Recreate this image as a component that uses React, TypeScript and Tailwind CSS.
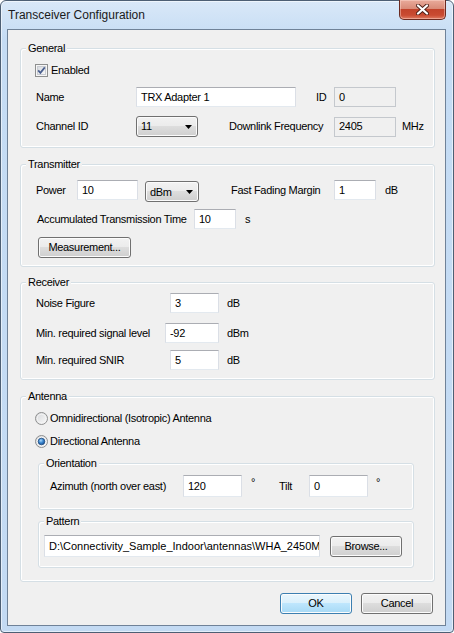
import React from 'react';

const btnBg =
  'bg-[linear-gradient(to_bottom,#f2f2f2_0%,#ebebeb_50%,#dddddd_50%,#cfcfcf_100%)]';

const TextBox = ({
  w,
  value,
  disabled,
  h = 'h-[20px]',
  extra = '',
}: {
  w: string;
  value: string;
  disabled?: boolean;
  h?: string;
  extra?: string;
}) => (
  <div
    className={`${w} ${h} ${extra} flex shrink-0 items-center overflow-hidden whitespace-nowrap border pl-[4px] ${
      disabled
        ? 'border-[#c4c8cd] bg-[#f0f0f0]'
        : 'border-[#dbdfe6] border-t-[#abadb3] border-b-[#e3e9ef] bg-white'
    }`}
  >
    {value}
  </div>
);

const Combo = ({ w, value }: { w: string; value: string }) => (
  <div
    className={`${w} flex h-[21px] shrink-0 items-center justify-between rounded-[3px] border border-[#707070] pl-[4px] pr-[5px] shadow-[inset_0_0_0_1px_#fbfbfb] ${btnBg}`}
  >
    <span>{value}</span>
    <svg width="7" height="4" viewBox="0 0 7 4">
      <path d="M0 0h7L3.5 4z" fill="#000" />
    </svg>
  </div>
);

const Button = ({
  w,
  label,
  primary,
}: {
  w: string;
  label: string;
  primary?: boolean;
}) => (
  <div
    className={`${w} flex h-[21px] shrink-0 items-center justify-center rounded-[3px] border shadow-[inset_0_0_0_1px_#fcfcfc] ${
      primary
        ? 'border-[#3c7fb1] bg-[linear-gradient(to_bottom,#eaf6fd_0%,#d9f0fc_50%,#bee6fd_50%,#a7d9f5_100%)]'
        : `border-[#707070] ${btnBg}`
    }`}
  >
    {label}
  </div>
);

const Group = ({
  title,
  className,
  children,
}: {
  title: string;
  className: string;
  children: React.ReactNode;
}) => (
  <div
    className={`flex shrink-0 flex-col rounded-[3px] border border-[#d5dfe5] shadow-[inset_1px_1px_0_#fff,inset_-1px_-1px_0_#fff] ${className}`}
  >
    <span className="-mt-[8px] ml-[5px] self-start bg-[#f0f0f0] px-[2px] leading-[14px]">
      {title}
    </span>
    {children}
  </div>
);

const CheckBox = () => (
  <svg width="13" height="13" viewBox="0 0 13 13">
    <defs>
      <linearGradient id="cbg" x1="0" y1="0" x2="1" y2="1">
        <stop offset="0" stopColor="#d6d9de" />
        <stop offset="1" stopColor="#fafafa" />
      </linearGradient>
    </defs>
    <rect x="0.5" y="0.5" width="12" height="12" fill="#f6f6f6" stroke="#8e8f8f" />
    <rect x="2.5" y="2.5" width="8" height="8" fill="url(#cbg)" stroke="#c9ccd2" />
    <path d="M3.2 6.4 5.4 8.9 9.8 3.4" fill="none" stroke="#4a5f8f" strokeWidth="1.7" />
  </svg>
);

const Radio = ({ checked }: { checked?: boolean }) => (
  <svg width="13" height="13" viewBox="0 0 13 13">
    <defs>
      <linearGradient id="rbg" x1="0" y1="0" x2="1" y2="1">
        <stop offset="0" stopColor="#d4d6d9" />
        <stop offset="1" stopColor="#fbfbfb" />
      </linearGradient>
      <radialGradient id="rdot" cx="0.4" cy="0.35" r="0.7">
        <stop offset="0" stopColor="#a9d8fb" />
        <stop offset="0.5" stopColor="#3a86cf" />
        <stop offset="1" stopColor="#1a4d8e" />
      </radialGradient>
    </defs>
    <circle cx="6.5" cy="6.5" r="6" fill="url(#rbg)" stroke="#8e8f8f" />
    <circle cx="6.5" cy="6.5" r="4.3" fill="none" stroke="#f4f4f4" />
    {checked && <circle cx="6.5" cy="6.5" r="3.3" fill="url(#rdot)" stroke="#1f4c80" strokeWidth="0.8" />}
  </svg>
);

export default function App() {
  return (
    <div className="h-[633px] w-[454px] bg-white font-['Liberation_Sans',Arial,sans-serif] text-[11px] tracking-[-0.3px] text-black">
      <div className="flex h-[633px] w-[454px] flex-col rounded-t-[6px] rounded-b-[4px] border border-[#4d5f74] bg-[linear-gradient(to_bottom,#d9e8f8_0%,#c5dcf4_6%,#c3daf3_100%)] pb-[6px] pl-[6px] pr-[7px] shadow-[inset_0_0_0_1px_rgba(255,255,255,0.55)]">
        <div className="flex h-[28px] shrink-0 items-start justify-between">
          <span className="ml-[1px] mt-[7px] text-[12px] leading-[14px] tracking-normal text-[#1a1a1a]">
            Transceiver Configuration
          </span>
          <div className="-mt-[1px] flex h-[20px] w-[47px] items-center justify-center rounded-b-[5px] border border-t-0 border-[#6b2a20] bg-[linear-gradient(to_bottom,#e9ab9b_0%,#d98b78_45%,#c2432b_50%,#c94b32_80%,#df7b62_100%)] shadow-[inset_0_0_0_1px_rgba(255,220,210,0.45)]">
            <svg width="13" height="11" viewBox="0 0 13 11">
              <path d="M2 1.5 11 9.5M11 1.5 2 9.5" stroke="#4a1c14" strokeWidth="4" strokeLinecap="round" />
              <path d="M2 1.5 11 9.5M11 1.5 2 9.5" stroke="#fff" strokeWidth="2.3" strokeLinecap="round" />
            </svg>
          </div>
        </div>

        <div className="flex h-[597px] shrink-0 flex-col border border-[#6f8298] bg-[#f0f0f0] pl-[12px] pr-[10px]">
          <Group title="General" className="mt-[18px] h-[100px]">
            <div className="mt-[9px] flex h-[13px] items-center pl-[14px]">
              <CheckBox />
              <span className="ml-[3px]">Enabled</span>
            </div>
            <div className="mt-[10px] flex h-[20px] items-center pl-[15px]">
              <span className="w-[100px] shrink-0">Name</span>
              <TextBox w="w-[160px]" value="TRX Adapter 1" />
              <span className="ml-[20px] w-[18px] shrink-0">ID</span>
              <TextBox w="w-[62px]" value="0" disabled />
            </div>
            <div className="mt-[9px] flex h-[21px] items-center pl-[15px]">
              <span className="w-[100px] shrink-0">Channel ID</span>
              <Combo w="w-[62px]" value="11" />
              <span className="ml-[31px] w-[105px] shrink-0">Downlink Frequency</span>
              <TextBox w="w-[62px]" value="2405" disabled />
              <span className="ml-[6px]">MHz</span>
            </div>
          </Group>

          <Group title="Transmitter" className="mt-[16px] h-[103px]">
            <div className="mt-[9px] flex h-[22px] items-start pl-[15px] leading-[20px]">
              <span className="w-[41px] shrink-0">Power</span>
              <TextBox w="w-[61px]" value="10" />
              <div className="ml-[7px] mt-[1px]">
                <Combo w="w-[54px]" value="dBm" />
              </div>
              <span className="ml-[32px] w-[103px] shrink-0">Fast Fading Margin</span>
              <TextBox w="w-[42px]" value="1" />
              <span className="ml-[9px]">dB</span>
            </div>
            <div className="mt-[7px] flex h-[20px] items-center pl-[16px]">
              <span className="w-[157px] shrink-0">Accumulated Transmission Time</span>
              <TextBox w="w-[42px]" value="10" />
              <span className="ml-[9px]">s</span>
            </div>
            <div className="mt-[8px] flex pl-[17px]">
              <Button w="w-[93px]" label="Measurement..." />
            </div>
          </Group>

          <Group title="Receiver" className="mt-[15px] h-[98px]">
            <div className="mt-[4px] flex h-[20px] items-center pl-[15px]">
              <span className="w-[134px] shrink-0">Noise Figure</span>
              <TextBox w="w-[49px]" value="3" />
              <span className="ml-[8px]">dB</span>
            </div>
            <div className="mt-[10px] flex h-[20px] items-center pl-[15px]">
              <span className="w-[129px] shrink-0">Min. required signal level</span>
              <TextBox w="w-[54px]" value="-92" />
              <span className="ml-[8px]">dBm</span>
            </div>
            <div className="mt-[7px] flex h-[20px] items-center pl-[15px]">
              <span className="w-[134px] shrink-0">Min. required SNIR</span>
              <TextBox w="w-[49px]" value="5" />
              <span className="ml-[8px]">dB</span>
            </div>
          </Group>

          <Group title="Antenna" className="mt-[16px] h-[186px]">
            <div className="mt-[9px] flex h-[13px] items-center pl-[14px]">
              <Radio />
              <span className="ml-[2px]">Omnidirectional (Isotropic) Antenna</span>
            </div>
            <div className="mt-[10px] flex h-[13px] items-center pl-[14px]">
              <Radio checked />
              <span className="ml-[2px]">Directional Antenna</span>
            </div>

            <Group title="Orientation" className="ml-[17px] mr-[20px] mt-[15px] h-[47px]">
              <div className="mt-[5px] flex h-[22px] items-center pl-[11px]">
                <span className="w-[133px] shrink-0">Azimuth (north over east)</span>
                <TextBox w="w-[59px]" h="h-[22px]" value="120" />
                <span className="w-[37px] shrink-0 self-start pl-[9px] leading-[14px]">°</span>
                <span className="w-[30px] shrink-0">Tilt</span>
                <TextBox w="w-[59px]" h="h-[22px]" value="0" />
                <span className="ml-[8px] self-start leading-[14px]">°</span>
              </div>
            </Group>

            <Group title="Pattern" className="ml-[17px] mr-[20px] mt-[11px] h-[47px]">
              <div className="mt-[7px] flex h-[22px] items-start pl-[5px]">
                <TextBox
                  w="w-[276px]"
                  h="h-[22px]"
                  extra="tracking-normal"
                  value="D:\Connectivity_Sample_Indoor\antennas\WHA_2450M"
                />
                <div className="ml-[10px] mt-[1px]">
                  <Button w="w-[72px]" label="Browse..." />
                </div>
              </div>
            </Group>
          </Group>

          <div className="mt-[11px] flex justify-end gap-[9px] pr-[2px]">
            <Button w="w-[72px]" label="OK" primary />
            <Button w="w-[72px]" label="Cancel" />
          </div>
        </div>
      </div>
    </div>
  );
}
